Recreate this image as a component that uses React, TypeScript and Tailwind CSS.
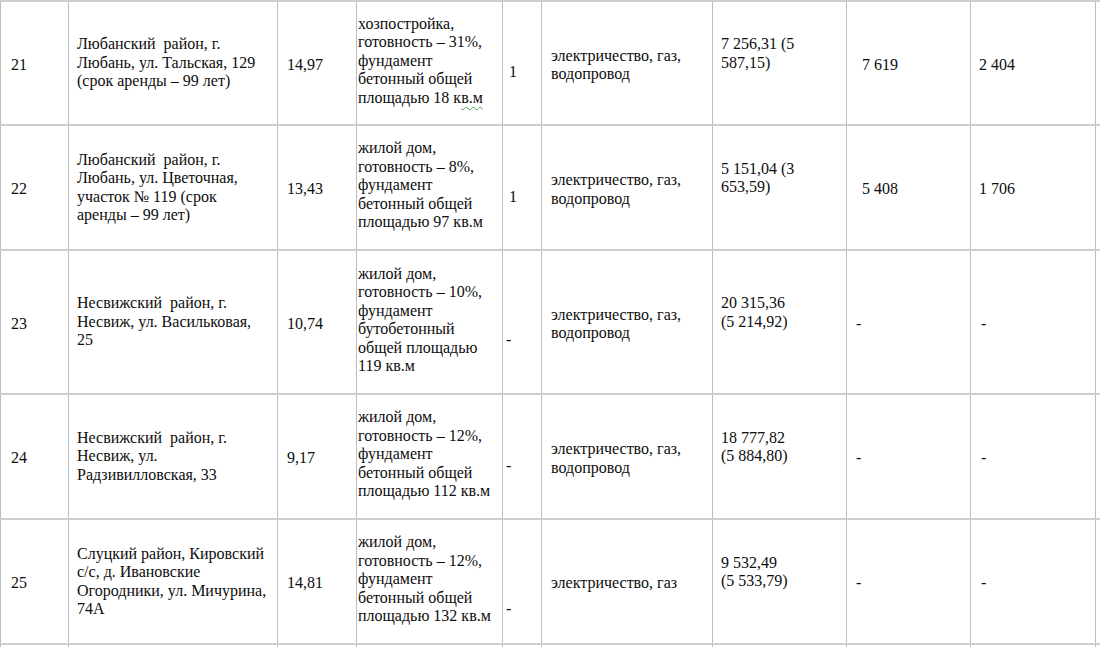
import React from 'react';

type Row = {
  num: string;
  address: string[];
  area: string;
  desc: React.ReactNode[];
  qty: string;
  qtyBlank: number;
  qtyPad: string;
  util: string[];
  price: string[];
  c8: string;
  c9: string;
  c8Pad: string;
  c9Pad: string;
  height: string;
};

const rows: Row[] = [
  {
    num: '21',
    address: ['Любанский  район, г.', 'Любань, ул. Тальская, 129', '(срок аренды – 99 лет)'],
    area: '14,97',
    desc: [
      'хозпостройка,',
      'готовность – 31%,',
      'фундамент',
      'бетонный общей',
      <>
        площадью 18 к
        <span className="underline decoration-wavy decoration-[#4a9e4a] decoration-1 underline-offset-[3px]">в.м</span>
      </>,
    ],
    qty: '1',
    qtyBlank: 1,
    qtyPad: 'pl-[6px]',
    util: ['электричество, газ,', 'водопровод'],
    price: ['7 256,31 (5', '587,15)'],
    c8: '7 619',
    c9: '2 404',
    c8Pad: 'pl-[15px]',
    c9Pad: 'pl-[8px]',
    height: 'h-[126px] border-t-2',
  },
  {
    num: '22',
    address: ['Любанский  район, г.', 'Любань, ул. Цветочная,', 'участок № 119 (срок', 'аренды – 99 лет)'],
    area: '13,43',
    desc: ['жилой дом,', 'готовность – 8%,', 'фундамент', 'бетонный общей', 'площадью 97 кв.м'],
    qty: '1',
    qtyBlank: 1,
    qtyPad: 'pl-[6px]',
    util: ['электричество, газ,', 'водопровод'],
    price: ['5 151,04 (3', '653,59)'],
    c8: '5 408',
    c9: '1 706',
    c8Pad: 'pl-[15px]',
    c9Pad: 'pl-[8px]',
    height: 'h-[125px]',
  },
  {
    num: '23',
    address: ['Несвижский  район, г.', 'Несвиж, ул. Васильковая,', '25'],
    area: '10,74',
    desc: ['жилой дом,', 'готовность – 10%,', 'фундамент', 'бутобетонный', 'общей площадью', '119 кв.м'],
    qty: '-',
    qtyBlank: 2,
    qtyPad: 'pl-[3px]',
    util: ['электричество, газ,', 'водопровод'],
    price: ['20 315,36', '(5 214,92)'],
    c8: '-',
    c9: '-',
    c8Pad: 'pl-[9px]',
    c9Pad: 'pl-[10px]',
    height: 'h-[144px]',
  },
  {
    num: '24',
    address: ['Несвижский  район, г.', 'Несвиж, ул.', 'Радзивилловская, 33'],
    area: '9,17',
    desc: ['жилой дом,', 'готовность – 12%,', 'фундамент', 'бетонный общей', 'площадью 112 кв.м'],
    qty: '-',
    qtyBlank: 1,
    qtyPad: 'pl-[3px]',
    util: ['электричество, газ,', 'водопровод'],
    price: ['18 777,82', '(5 884,80)'],
    c8: '-',
    c9: '-',
    c8Pad: 'pl-[9px]',
    c9Pad: 'pl-[10px]',
    height: 'h-[125px]',
  },
  {
    num: '25',
    address: ['Слуцкий район, Кировский', 'с/с, д. Ивановские', 'Огородники, ул. Мичурина,', '74А'],
    area: '14,81',
    desc: ['жилой дом,', 'готовность – 12%,', 'фундамент', 'бетонный общей', 'площадью 132 кв.м'],
    qty: '-',
    qtyBlank: 3,
    qtyPad: 'pl-[3px]',
    util: ['электричество, газ'],
    price: ['9 532,49', '(5 533,79)'],
    c8: '-',
    c9: '-',
    c8Pad: 'pl-[9px]',
    c9Pad: 'pl-[10px]',
    height: 'h-[125px]',
  },
];

function Lines({ lines, before = 0, after = 0 }: { lines: React.ReactNode[]; before?: number; after?: number }) {
  return (
    <>
      {Array.from({ length: before }).map((_, i) => (
        <div key={'b' + i}>&nbsp;</div>
      ))}
      {lines.map((line, i) => (
        <div key={i} className="whitespace-pre">
          {line}
        </div>
      ))}
      {Array.from({ length: after }).map((_, i) => (
        <div key={'a' + i}>&nbsp;</div>
      ))}
    </>
  );
}

const cell = 'flex flex-col justify-center border-r border-[#bdbdbd] shrink-0';

function App() {
  return (
    <div className="w-[1100px] h-[647px] overflow-hidden bg-white text-[#0d0d0d] font-[family-name:Liberation_Serif,serif] text-[16px] leading-[18.5px]">
      {rows.map((row) => (
        <div key={row.num} className={`flex border-b-2 border-[#cfcfcf] ${row.height}`}>
          <div className={`${cell} w-[69px] border-l pl-[10px] pt-[4px]`}>{row.num}</div>
          <div className={`${cell} w-[209px] pl-[8px]`}>
            <Lines lines={row.address} />
          </div>
          <div className={`${cell} w-[79px] pl-[9px] pt-[4px]`}>{row.area}</div>
          <div className={`${cell} w-[146px] pl-[1px] pb-[4px]`}>
            <Lines lines={row.desc} />
          </div>
          <div className={`${cell} w-[39px] ${row.qtyPad}`}>
            <Lines lines={[row.qty]} before={row.qtyBlank} />
          </div>
          <div className={`${cell} w-[171px] pl-[9px] pt-[4px]`}>
            <Lines lines={row.util} />
          </div>
          <div className={`${cell} w-[134px] pl-[8px]`}>
            <Lines lines={row.price} after={1} />
          </div>
          <div className={`${cell} w-[124px] ${row.c8Pad} pt-[4px]`}>{row.c8}</div>
          <div className={`${cell} w-[125px] ${row.c9Pad} pt-[4px]`}>{row.c9}</div>
        </div>
      ))}
      <div className="flex h-[4px]">
        <div className="w-[69px] border-l border-r border-[#bdbdbd] shrink-0" />
        <div className="w-[209px] border-r border-[#bdbdbd] shrink-0" />
        <div className="w-[79px] border-r border-[#bdbdbd] shrink-0" />
        <div className="w-[146px] border-r border-[#bdbdbd] shrink-0" />
        <div className="w-[39px] border-r border-[#bdbdbd] shrink-0" />
        <div className="w-[171px] border-r border-[#bdbdbd] shrink-0" />
        <div className="w-[134px] border-r border-[#bdbdbd] shrink-0" />
        <div className="w-[124px] border-r border-[#bdbdbd] shrink-0" />
        <div className="w-[125px] border-r border-[#bdbdbd] shrink-0" />
      </div>
    </div>
  );
}

export default App;
